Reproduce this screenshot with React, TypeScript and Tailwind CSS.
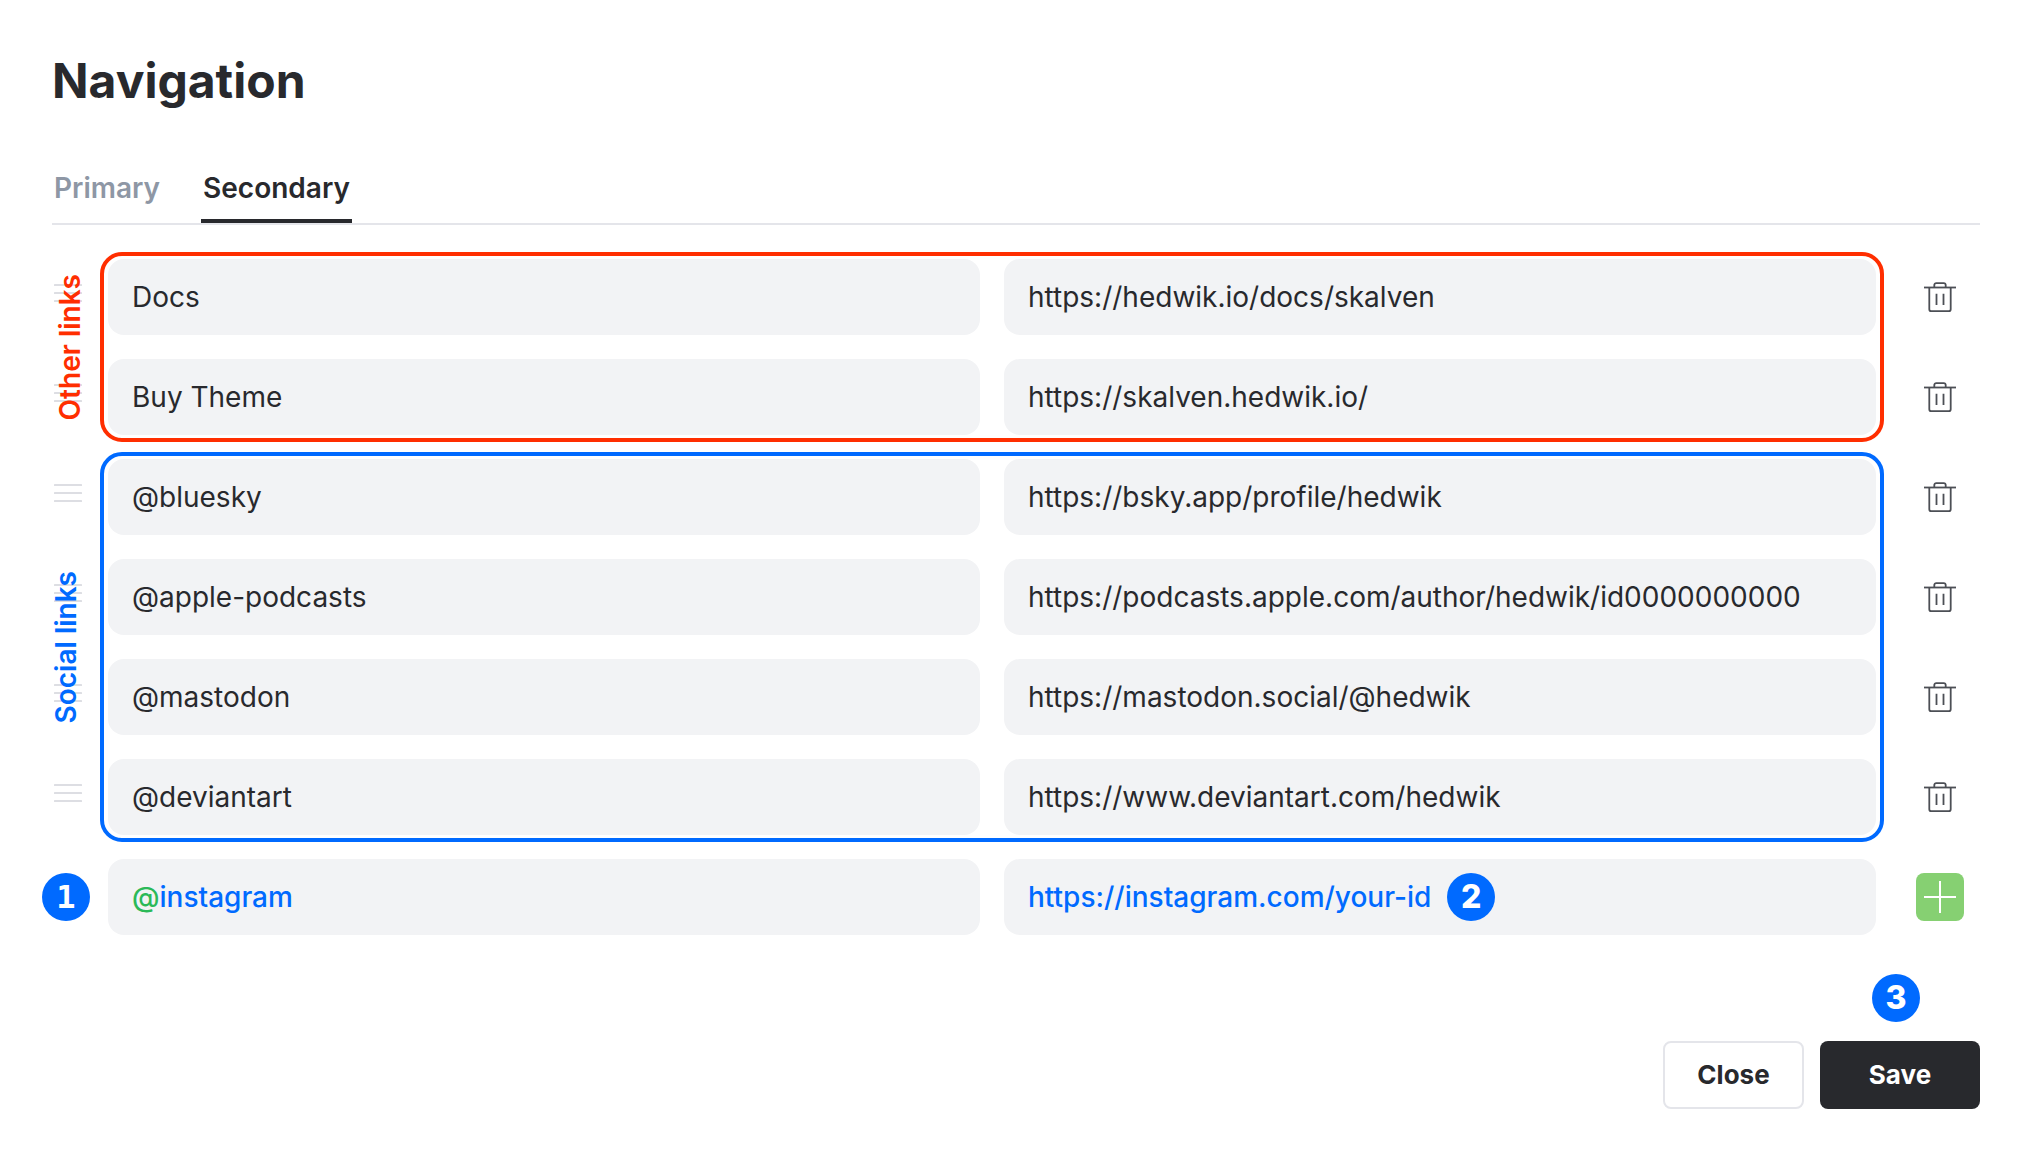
import React from 'react';
import { clsx } from 'clsx';

interface NavItem {
  label: string;
  url: string;
}

const otherLinks: NavItem[] = [
  { label: 'Docs', url: 'https://hedwik.io/docs/skalven' },
  { label: 'Buy Theme', url: 'https://skalven.hedwik.io/' },
];

const socialLinks: NavItem[] = [
  { label: '@bluesky', url: 'https://bsky.app/profile/hedwik' },
  { label: '@apple-podcasts', url: 'https://podcasts.apple.com/author/hedwik/id0000000000' },
  { label: '@mastodon', url: 'https://mastodon.social/@hedwik' },
  { label: '@deviantart', url: 'https://www.deviantart.com/hedwik' },
];

const TrashIcon = () => (
  <svg className="w-8 h-8" viewBox="0 0 32 32" fill="none" stroke="#4c4f55" strokeWidth="1.8" strokeLinejoin="round">
    <path d="M0 6.5h32" />
    <path d="M10.3 6.3V4.1a2 2 0 0 1 2-2h7.4a2 2 0 0 1 2 2v2.2" />
    <path d="M5.3 6.5v21.7a2 2 0 0 0 2 2h17.4a2 2 0 0 0 2-2V6.5" />
    <path d="M12.5 12.7v11.2M19.5 12.7v11.2" />
  </svg>
);

const DragHandle = () => (
  <button type="button" aria-label="Reorder" className="ml-[2px] mt-[25px] self-start cursor-grab">
    <svg className="w-7 h-[18px]" viewBox="0 0 28 18" fill="#dddee3">
      <rect width="28" height="2" rx="0.5" />
      <rect y="8" width="28" height="2" rx="0.5" />
      <rect y="16" width="28" height="2" rx="0.5" />
    </svg>
  </button>
);

const StepBadge: React.FC<{ step: number; className?: string }> = ({ step, className }) => (
  <span
    className={clsx(
      'flex w-12 h-12 shrink-0 items-center justify-center rounded-full bg-[#006aff] text-[32px] leading-10 font-extrabold text-white',
      className
    )}
  >
    {step}
  </span>
);

const rowClass = 'grid grid-cols-[56px_minmax(0,1fr)_104px] items-center';
const fieldClass = 'h-[76px] w-full min-w-0 rounded-2xl bg-[#f2f3f5] px-6';

const NavRow: React.FC<{ item: NavItem }> = ({ item }) => (
  <li className={rowClass}>
    <DragHandle />
    <div className="grid grid-cols-2 gap-6">
      <input className={fieldClass} aria-label="Label" defaultValue={item.label} />
      <input className={fieldClass} aria-label={`${item.label} URL`} defaultValue={item.url} />
    </div>
    <button type="button" aria-label={`Delete ${item.label}`} className="ml-12 w-8 h-8">
      <TrashIcon />
    </button>
  </li>
);

interface LinkGroupProps {
  title: string;
  items: NavItem[];
  titleClass: string;
  frameClass: string;
}

const LinkGroup: React.FC<LinkGroupProps> = ({ title, items, titleClass, frameClass }) => (
  <section className="relative">
    <ul className="flex flex-col gap-6">
      {items.map((item) => (
        <NavRow key={item.label} item={item} />
      ))}
    </ul>
    {/* Outline and rotated caption drawn over the group */}
    <div
      className={clsx(
        'pointer-events-none absolute -top-[7px] -bottom-[7px] left-12 right-24 rounded-[22px] border-4',
        frameClass
      )}
    />
    <div className="pointer-events-none absolute inset-y-0 left-0 flex items-center">
      <h2 className={clsx('rotate-180 font-semibold leading-9 [writing-mode:vertical-rl]', titleClass)}>{title}</h2>
    </div>
  </section>
);

export default function App() {
  return (
    <main className="min-h-screen bg-white pt-[53px] pr-14 pb-10 pl-[52px] font-['Inter',sans-serif] text-[28px] leading-9 text-[#28292d]">
      <h1 className="text-5xl leading-14 font-bold">Navigation</h1>

      <div role="tablist" className="mt-[61px] flex gap-[39px] border-b-2 border-[#e4e5ea]">
        <button type="button" role="tab" aria-selected="false" className="border-b-4 border-transparent px-[2px] pb-[13px] font-semibold text-[#8e97a5]">
          Primary
        </button>
        <button type="button" role="tab" aria-selected="true" className="border-b-4 border-[#28292d] px-[2px] pb-[13px] font-semibold">
          Secondary
        </button>
      </div>

      <form className="mt-[34px] flex flex-col gap-6" onSubmit={(e) => e.preventDefault()}>
        <LinkGroup title="Other links" items={otherLinks} titleClass="text-[#ff2e00]" frameClass="border-[#ff2e00]" />
        <LinkGroup title="Social links" items={socialLinks} titleClass="-ml-1 text-[#006aff]" frameClass="border-[#006aff]" />

        <div className={rowClass}>
          <StepBadge step={1} className="-ml-[10px] [font-family:'DejaVu_Sans_Mono',monospace]" />
          <div className="grid grid-cols-2 gap-6">
            <label className={clsx(fieldClass, 'flex items-center font-medium')}>
              <span className="text-[#2bb958]">@</span>
              <input className="min-w-0 flex-1 text-[#006aff]" aria-label="New label" defaultValue="instagram" />
            </label>
            <div className={clsx(fieldClass, 'flex items-center gap-4 font-medium')}>
              <input
                className="min-w-0 text-[#006aff] [field-sizing:content]"
                aria-label="New URL"
                defaultValue="https://instagram.com/your-id"
              />
              <StepBadge step={2} />
            </div>
          </div>
          <button type="button" aria-label="Add link" className="ml-10 flex w-12 h-12 items-center justify-center rounded-lg bg-[#86d072]">
            <svg className="w-8 h-8" viewBox="0 0 32 32" stroke="#fff" strokeWidth="2">
              <path d="M16 0v32M0 16h32" />
            </svg>
          </button>
        </div>

        <div className="mt-[82px] flex justify-end gap-4 text-[26px] font-bold">
          <button type="button" className="h-[68px] w-[141px] rounded-lg border-2 border-[#e4e5ea]">
            Close
          </button>
          <div className="relative">
            <StepBadge step={3} className="absolute left-[52px] -top-[67px]" />
            <button type="submit" className="h-[68px] w-40 rounded-lg bg-[#28292d] text-white">
              Save
            </button>
          </div>
        </div>
      </form>
    </main>
  );
}
